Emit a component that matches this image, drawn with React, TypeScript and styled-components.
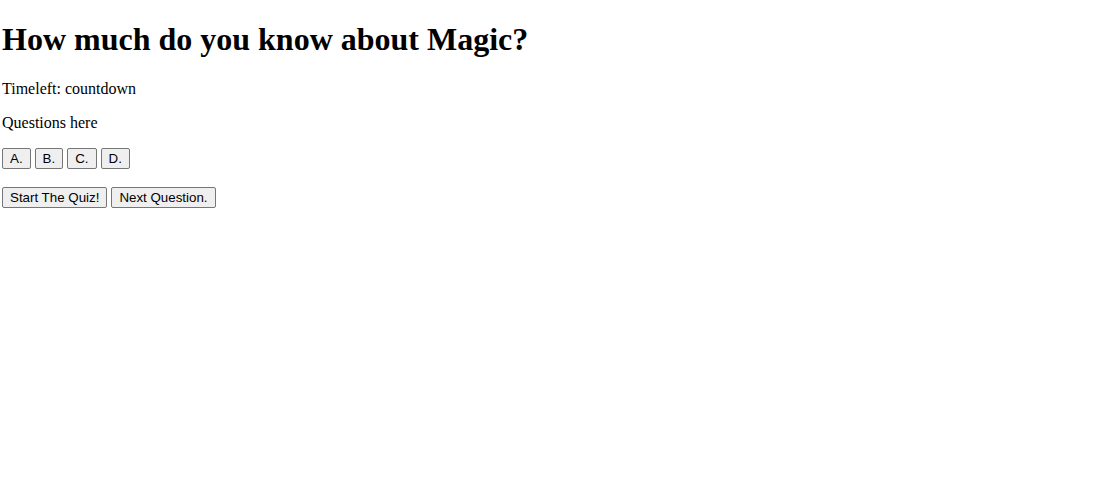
import React from "react";
import styled, { createGlobalStyle } from "styled-components";

const Global = createGlobalStyle`
  html, body { background: #fff; }
  body {
    margin: 0 2px;
    font-family: "Liberation Serif", "Times New Roman", serif;
    font-size: 16px;
    color: #000;
  }
`;

const Title = styled.h1`
  font-size: 32px;
  font-weight: bold;
  margin: 21.44px 0;
`;

const Text = styled.p`
  margin: 16px 0;
`;

const Row = styled.p`
  margin: 16px 0;
  padding-bottom: 2px;
`;

const Button = styled.button`
  font-family: "Liberation Sans", Arial, sans-serif;
  font-size: 13.333px;
  color: #000;
  background: #efefef;
  border: 1px solid #767676;
  border-radius: 2px;
  padding: 2px 7px;
  margin: 0 4px 0 0;
  line-height: normal;
`;

export default function App() {
  return (
    <>
      <Global />
      <Title>How much do you know about Magic?</Title>
      <Text>Timeleft: countdown</Text>
      <Text>Questions here</Text>
      <Row>
        <Button>A.</Button>
        <Button>B.</Button>
        <Button>C.</Button>
        <Button>D.</Button>
      </Row>
      <Row>
        <Button>Start The Quiz!</Button>
        <Button>Next Question.</Button>
      </Row>
    </>
  );
}
